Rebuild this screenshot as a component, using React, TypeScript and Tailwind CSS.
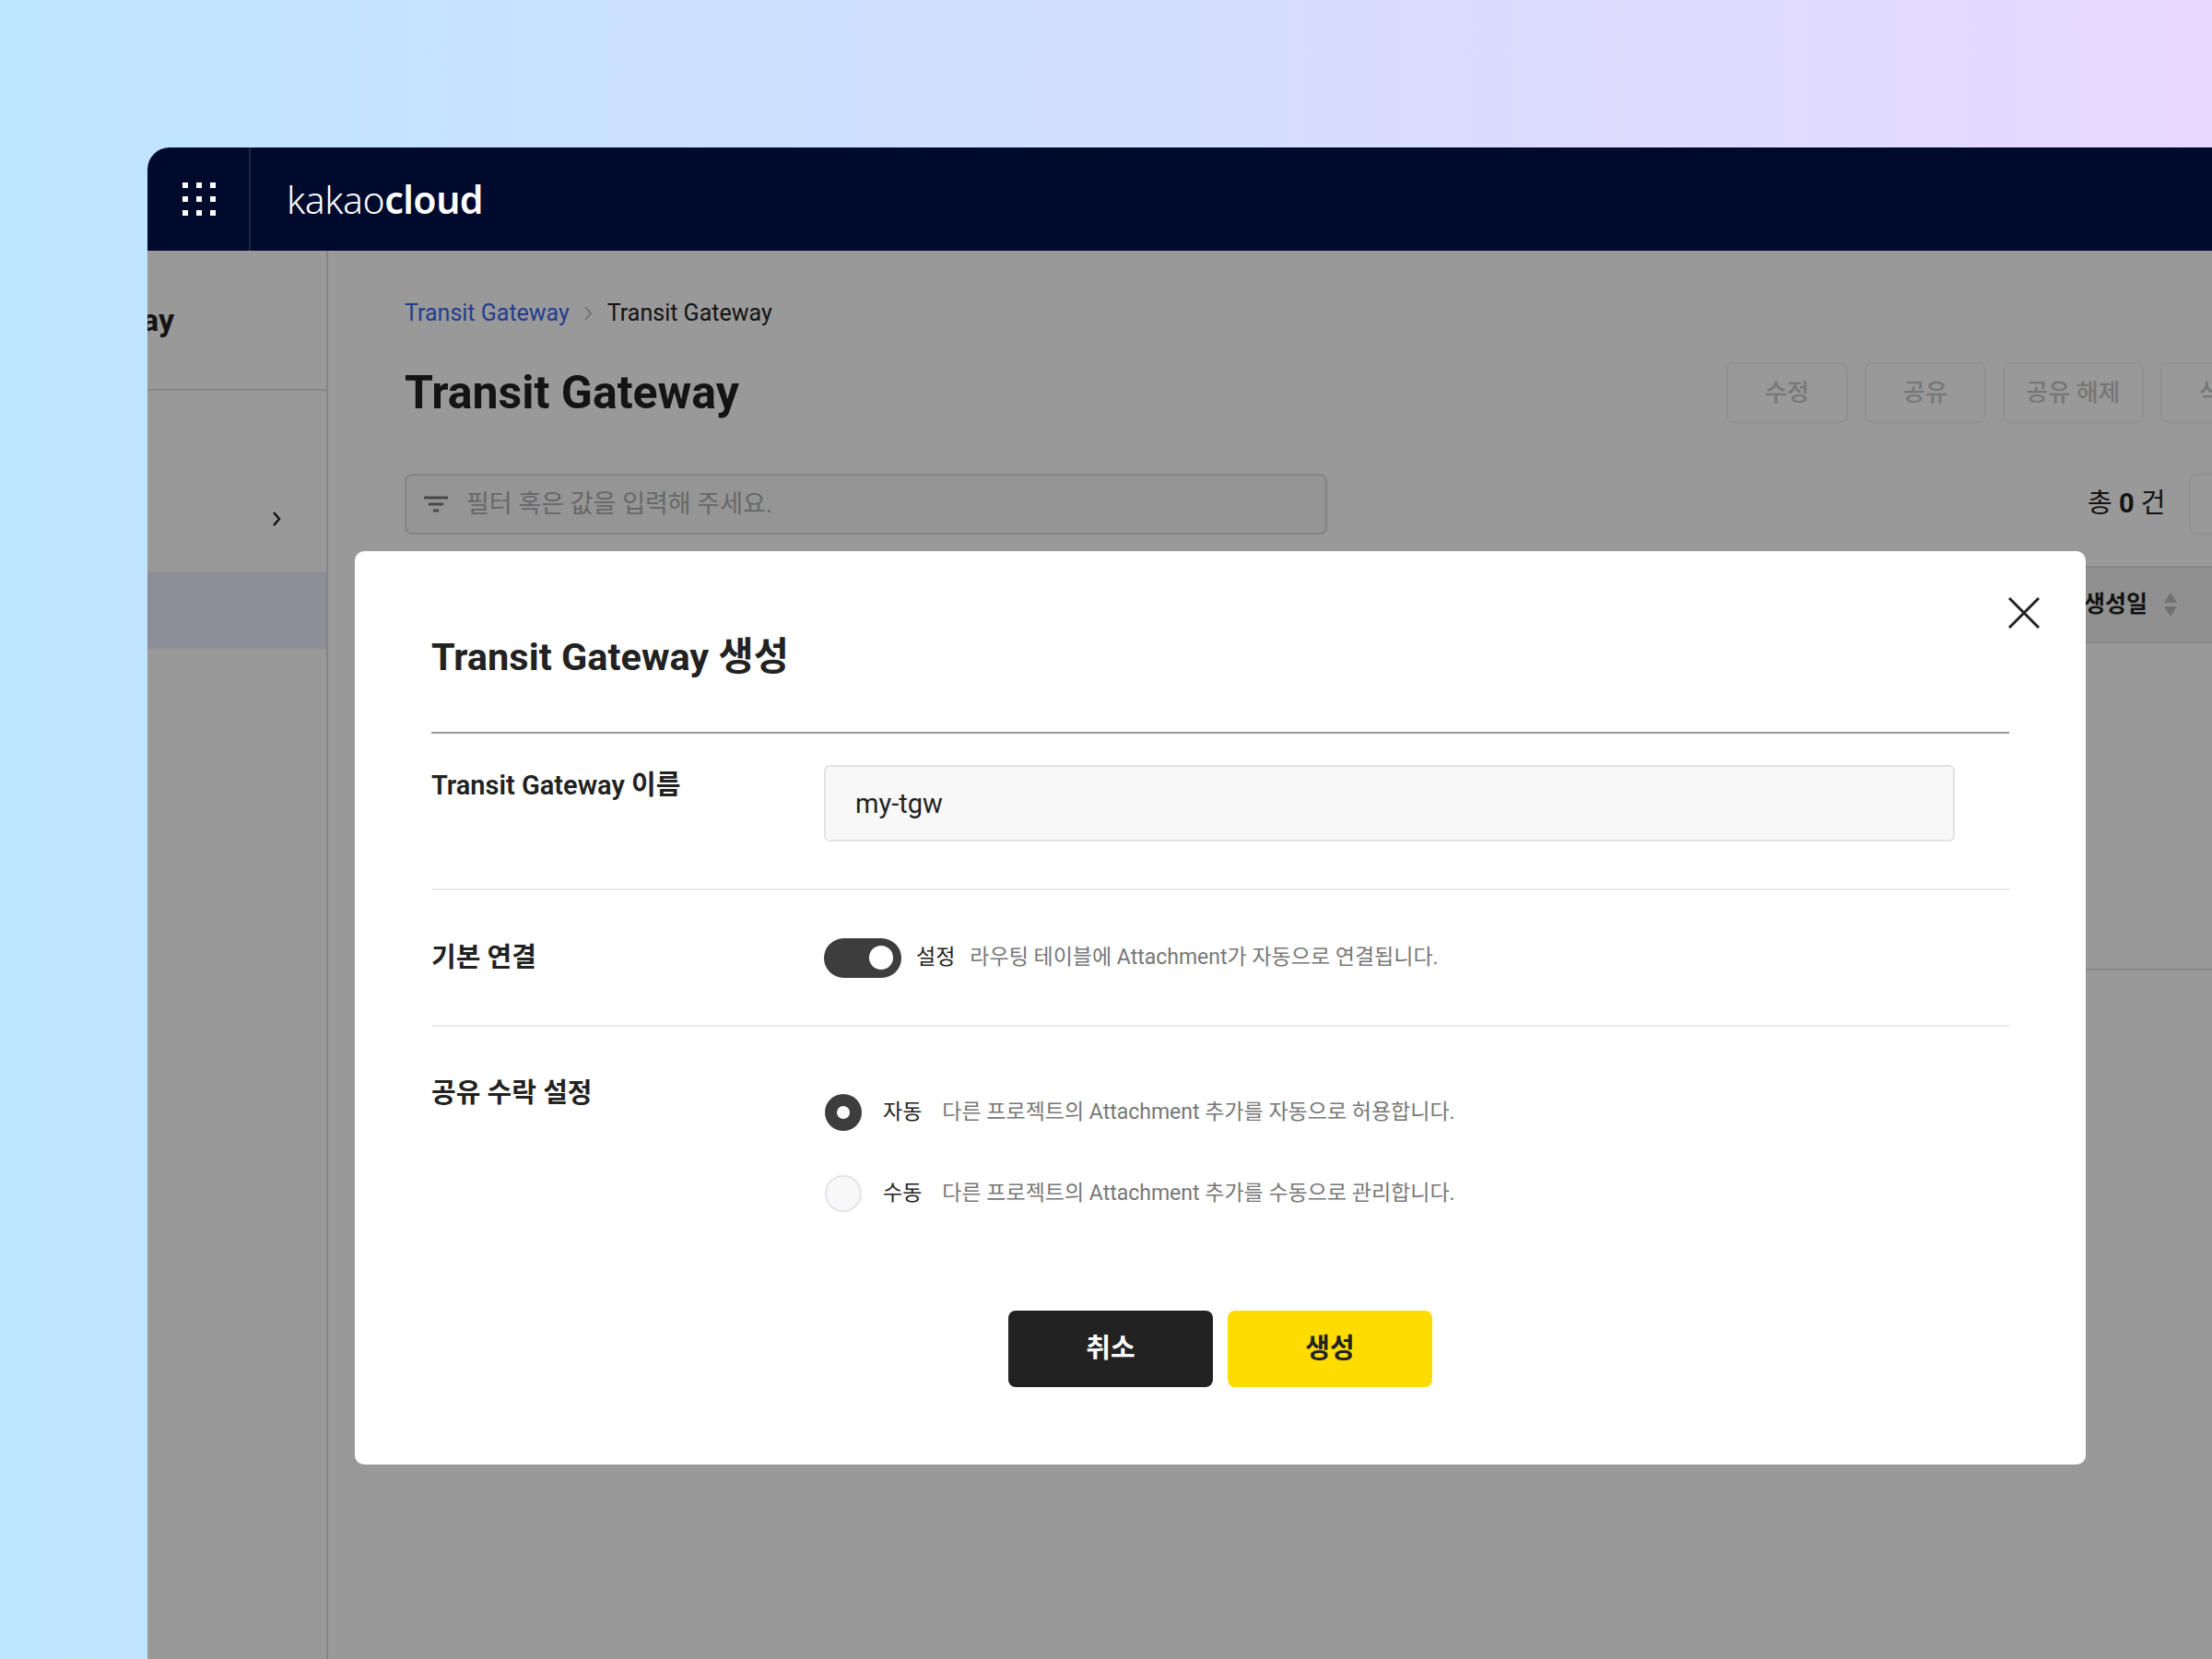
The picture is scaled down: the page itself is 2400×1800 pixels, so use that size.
import { Fragment } from 'react'

const toolbarButtons = [
  { label: '수정', width: 'w-[132px]' },
  { label: '공유', width: 'w-[132px]' },
  { label: '공유 해제', width: 'w-[153px]' },
  { label: '삭제', width: 'w-[132px]' },
]

const radioOptions = [
  { label: '자동', desc: '다른 프로젝트의 Attachment 추가를 자동으로 허용합니다.', checked: true },
  { label: '수동', desc: '다른 프로젝트의 Attachment 추가를 수동으로 관리합니다.', checked: false },
]

function AppHeader() {
  return (
    <header className="flex h-[112px] shrink-0 items-center bg-[#000a2c]">
      <div className="flex h-full w-[112px] items-center justify-center border-r-2 border-[#1c2645] pl-[1px]">
        <div className="grid grid-cols-3 gap-[9px]">
          {Array.from({ length: 9 }).map((_, i) => (
            <span key={i} className="h-[6px] w-[6px] bg-white" />
          ))}
        </div>
      </div>
      <div className="ml-[39px] flex items-baseline text-[41px] leading-none tracking-[-0.5px] text-white [font-family:'Noto_Sans',sans-serif]">
        <span className="font-light">kakao</span>
        <span className="font-semibold">cloud</span>
      </div>
    </header>
  )
}

function Sidebar() {
  return (
    <aside className="w-[196px] shrink-0 overflow-hidden border-r-2 border-[#dedede]">
      <div className="flex h-[152px] items-center justify-end border-b-2 border-[#e2e2e2] pr-[165px]">
        <span className="shrink-0 text-[34px] font-bold whitespace-nowrap text-[#222]">Transit Gateway</span>
      </div>
      <div className="flex h-[196px] items-center justify-end pt-[81px] pr-[48px]">
        <svg width="12" height="18" viewBox="0 0 12 18" fill="none" stroke="#222" strokeWidth="2.5">
          <path d="M3 2l6 7-6 7" />
        </svg>
      </div>
      <div className="h-[84px] bg-[#e9eefb]" />
    </aside>
  )
}

function MainContent() {
  return (
    <main className="min-w-0 flex-1 pt-[52px] pl-[83px]">
      <nav className="flex h-[32px] items-center text-[25px] whitespace-nowrap">
        <span className="text-[#3b66f0]">Transit Gateway</span>
        <svg className="mx-[15px]" width="11" height="18" viewBox="0 0 11 18" fill="none" stroke="#b5b5b5" strokeWidth="1.6">
          <path d="M2 2l6 7-6 7" />
        </svg>
        <span className="text-[#222]">Transit Gateway</span>
      </nav>
      <div className="mt-[37px] flex h-[66px] items-center">
        <h1 className="text-[50px] font-bold whitespace-nowrap text-[#222]">Transit Gateway</h1>
        <div className="ml-[1071px] flex shrink-0 gap-[18px]">
          {toolbarButtons.map((b) => (
            <button
              key={b.label}
              className={`${b.width} h-[66px] shrink-0 rounded-[8px] border-2 border-[#f2f2f2] text-[26px] font-medium text-[#c6c6c6]`}
            >
              {b.label}
            </button>
          ))}
        </div>
      </div>
      <div className="mt-[55px] flex h-[66px] items-center">
        <div className="flex h-full w-[1001px] shrink-0 items-center rounded-[8px] border-2 border-[#dcdcdc] bg-[#f8f8f8] pl-[18px]">
          <svg width="28" height="20" viewBox="0 0 28 20" fill="none" stroke="#777" strokeWidth="3">
            <path d="M1 3h26M6 10h16M11 17h6" />
          </svg>
          <span className="ml-[19px] text-[27px] text-[#adadad]">필터 혹은 값을 입력해 주세요.</span>
        </div>
        <div className="ml-[825px] shrink-0 text-[29px] whitespace-nowrap text-[#222]">
          총 <b className="font-bold">0</b> 건
        </div>
        <div className="ml-[26px] h-full w-[120px] shrink-0 rounded-[8px] border-2 border-[#f2f2f2]" />
      </div>
      <div className="mt-[34px] flex h-[84px] items-center justify-end border-y-2 border-[#e2e2e2] bg-[#f0f0f0] pr-[37px]">
        <span className="text-[25px] font-bold text-[#222]">생성일</span>
        <svg className="ml-[17px]" width="16" height="26" viewBox="0 0 16 26" fill="#bcbcbc">
          <path d="M8 0l7 11H1zM8 26l7-11H1z" />
        </svg>
      </div>
      <div className="h-[355px] border-b-2 border-[#e2e2e2]" />
    </main>
  )
}

function Dialog() {
  return (
    <div className="absolute top-[438px] left-[225px] flex h-[991px] w-[1878px] flex-col rounded-[10px] bg-white px-[83px] text-[#222]">
      <svg className="absolute top-[50px] right-[50px]" width="34" height="34" viewBox="0 0 34 34" fill="none" stroke="#222" strokeWidth="3">
        <path d="M1 1l32 32M33 1L1 33" />
      </svg>
      <div className="flex h-[198px] shrink-0 items-start border-b-2 border-[#999] pt-[86px]">
        <h2 className="text-[41.5px] leading-[58px] font-bold">Transit Gateway 생성</h2>
      </div>
      <div className="flex h-[170px] shrink-0 border-b-2 border-[#e8e8e8] pt-[34px]">
        <label className="w-[426px] shrink-0 pt-[2px] text-[29px] leading-[40px] font-semibold">Transit Gateway 이름</label>
        <div className="flex h-[83px] w-[1227px] items-center rounded-[6px] border-2 border-[#e2e2e6] bg-[#f8f8f8] pt-[2px] pl-[32px] text-[29px]">
          my-tgw
        </div>
      </div>
      <div className="flex h-[148px] shrink-0 items-center border-b-2 border-[#e8e8e8]">
        <label className="w-[426px] shrink-0 text-[29px] leading-[40px] font-semibold">기본 연결</label>
        <span className="flex h-[43px] w-[84px] items-center justify-end rounded-full bg-[#3d3d3d] pr-[9px]">
          <span className="h-[26px] w-[26px] rounded-full bg-white" />
        </span>
        <span className="ml-[16px] text-[23px]">설정</span>
        <span className="ml-[16px] text-[23px] text-[#777]">라우팅 테이블에 Attachment가 자동으로 연결됩니다.</span>
      </div>
      <div className="flex shrink-0 pt-[52px]">
        <label className="w-[426px] shrink-0 text-[29px] leading-[40px] font-semibold">공유 수락 설정</label>
        <div className="flex flex-col gap-[48px] pt-[21px]">
          {radioOptions.map((o) => (
            <div key={o.label} className="flex h-[40px] items-center text-[23px] whitespace-nowrap">
              {o.checked ? (
                <span className="ml-[1px] flex h-[40px] w-[40px] items-center justify-center rounded-full bg-[#3d3d3d]">
                  <span className="h-[14px] w-[14px] rounded-full bg-white" />
                </span>
              ) : (
                <span className="ml-[1px] h-[40px] w-[40px] rounded-full border-2 border-[#e4e4ea] bg-[#f8f8f8]" />
              )}
              <span className="ml-[23px]">{o.label}</span>
              <span className="ml-[22px] text-[#777]">{o.desc}</span>
            </div>
          ))}
        </div>
      </div>
      <div className="mt-[107px] flex justify-center gap-[16px] text-[29px] font-bold">
        <button className="h-[83px] w-[222px] rounded-[8px] bg-[#222] text-white">취소</button>
        <button className="h-[83px] w-[222px] rounded-[8px] bg-[#ffdc00] text-[#222]">생성</button>
      </div>
    </div>
  )
}

export default function App() {
  return (
    <Fragment>
      <div className="h-[1800px] w-[2400px] overflow-hidden bg-gradient-to-r from-[#bde5ff] to-[#e7d8ff] pt-[160px] pl-[160px] [font-family:Roboto,'Noto_Sans_CJK_KR',sans-serif]">
        <div className="relative flex h-[1640px] w-[2240px] flex-col overflow-hidden rounded-tl-[24px] bg-white">
          <AppHeader />
          <div className="flex min-h-0 flex-1">
            <Sidebar />
            <MainContent />
          </div>
          {/* dim layer sits under the header only */}
          <div className="absolute inset-x-0 top-[112px] bottom-0 bg-black/40" />
          <Dialog />
        </div>
      </div>
    </Fragment>
  )
}
